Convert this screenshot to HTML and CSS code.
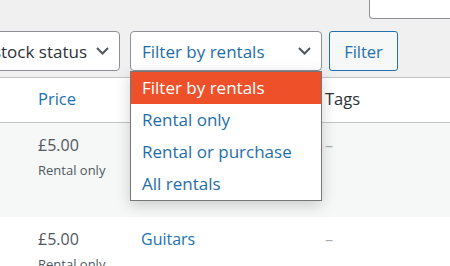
FILE: index.html
```html
<!DOCTYPE html>
<html lang="en">
<head>
<meta charset="utf-8">
<title>Products</title>
<link rel="stylesheet" href="styles.css">
</head>
<body>
<div class="page">
  <div class="search-row">
    <div class="search-input"></div>
  </div>

  <div class="tablenav">
    <div class="select stock">
      <span class="select-label">Filter by stock status</span>
      <svg class="chev" width="13" height="8" viewBox="0 0 13 8"><polyline points="1,1 6.5,6.5 12,1" fill="none" stroke="#50575e" stroke-width="2"/></svg>
    </div>
    <div class="select-wrap">
      <div class="select rentals">
        <span class="select-label">Filter by rentals</span>
        <svg class="chev" width="13" height="8" viewBox="0 0 13 8"><polyline points="1,1 6.5,6.5 12,1" fill="none" stroke="#50575e" stroke-width="2"/></svg>
      </div>
      <ul class="dropdown">
        <li class="opt active">Filter by rentals</li>
        <li class="opt">Rental only</li>
        <li class="opt">Rental or purchase</li>
        <li class="opt">All rentals</li>
      </ul>
    </div>
    <button class="btn">Filter</button>
  </div>

  <div class="table">
    <div class="row head">
      <div class="cell"></div>
      <div class="cell"><span class="sort-link">Price</span></div>
      <div class="cell"></div>
      <div class="cell th-plain">Tags</div>
    </div>
    <div class="row alt">
      <div class="cell"></div>
      <div class="cell">
        <div class="price">£5.00</div>
        <div class="note">Rental only</div>
      </div>
      <div class="cell"></div>
      <div class="cell"><span class="dash">–</span></div>
    </div>
    <div class="row">
      <div class="cell"></div>
      <div class="cell">
        <div class="price">£5.00</div>
        <div class="note">Rental only</div>
      </div>
      <div class="cell"><span class="cat-link">Guitars</span></div>
      <div class="cell"><span class="dash">–</span></div>
    </div>
  </div>
</div>
</body>
</html>
```

FILE: styles.css
```css
* { box-sizing: border-box; }

html, body {
  margin: 0;
  padding: 0;
  background: #f0f0f1;
  font-family: "Open Sans", "Noto Sans", sans-serif;
  color: #50575e;
}

.page {
  width: 450px;
  height: 266px;
  overflow: hidden;
}

.search-row {
  display: flex;
  height: 19px;
  padding-left: 369px;
}

.search-input {
  width: 100px;
  height: 19px;
  flex: none;
  background: #fff;
  border: 1px solid #8c8f94;
  border-top: none;
  border-radius: 0 0 0 4px;
}

.tablenav {
  display: flex;
  height: 40px;
  margin-top: 12px;
}

.select {
  display: flex;
  align-items: center;
  height: 40px;
  background: #fff;
  border: 1px solid #8c8f94;
  border-radius: 4px;
  font-size: 17px;
  white-space: nowrap;
}

.stock {
  width: 200px;
  margin-left: -80px;
  justify-content: flex-end;
  gap: 9px;
  padding-right: 10px;
  color: #2c3338;
}

.select-wrap {
  position: relative;
  margin-left: 10px;
  width: 192px;
}

.rentals {
  width: 192px;
  justify-content: space-between;
  padding: 0 10px 0 11px;
  color: #1f6ea8;
}

.chev { flex: none; }

.dropdown {
  position: absolute;
  top: 40px;
  left: 0;
  right: 0;
  margin: 0;
  padding: 0;
  list-style: none;
  background: #fff;
  border: 1px solid #767676;
  box-shadow: 0 4px 14px rgba(0, 0, 0, 0.18);
  z-index: 5;
}

.opt {
  height: 32px;
  line-height: 32px;
  padding-left: 11px;
  font-size: 17px;
  color: #1f6ea8;
  white-space: nowrap;
}

.opt.active {
  background: #ee5129;
  color: #fff;
}

.btn {
  margin-left: 7px;
  height: 40px;
  width: 69px;
  padding: 0;
  background: #f6f7f7;
  border: 1px solid #2271b1;
  border-radius: 3px;
  color: #2271b1;
  font-family: inherit;
  font-size: 16.5px;
}

.table {
  margin-top: 6px;
  border-top: 1px solid #c3c4c7;
  background: #fff;
}

.row {
  display: grid;
  grid-template-columns: 28px 103px 184px 1fr;
}

.row.head {
  height: 45px;
  border-bottom: 1px solid #c3c4c7;
}

.row.alt {
  background: #f6f7f7;
  height: 94px;
}

.cell {
  padding: 10px 10px 0;
}

.head .cell {
  padding: 9px 10px 0;
  font-size: 16.5px;
  line-height: 24px;
}

.sort-link { color: #2271b1; }
.th-plain { color: #2c3338; }

.price {
  font-size: 16px;
  line-height: 24px;
  color: #50575e;
}

.note {
  margin-top: 3px;
  font-size: 13px;
  line-height: 20px;
  color: #50575e;
}

.cat-link {
  font-size: 16px;
  line-height: 24px;
  color: #2271b1;
}

.dash {
  font-size: 16px;
  line-height: 24px;
  color: #a7aaad;
}
```
